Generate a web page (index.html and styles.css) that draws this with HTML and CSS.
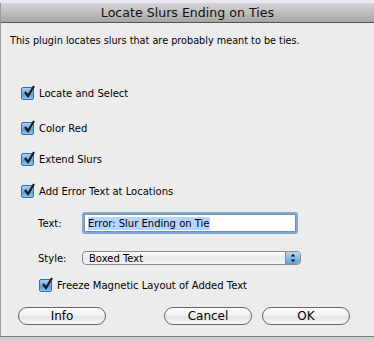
FILE: index.html
```html
<!DOCTYPE html>
<html>
    <head>
        <title>Locate Slurs Ending on Ties</title>
        <meta name="viewport" content="width=device-width, initial-scale=1.0">
        <link rel="stylesheet" href="styles.css">
    </head>
    <body>
        <div class="dialog">
            <div class="titlebar">Locate Slurs Ending on Ties</div>
            <div class="content">
                <p class="intro">This plugin locates slurs that are probably meant to be ties.</p>

                <label class="option opt-first"><span class="box"><svg viewBox="0 0 14 14"><path d="M3 7 L6 11 L12 1" /></svg></span>Locate and Select</label>
                <label class="option opt-color"><span class="box"><svg viewBox="0 0 14 14"><path d="M3 7 L6 11 L12 1" /></svg></span>Color Red</label>
                <label class="option opt-extend"><span class="box"><svg viewBox="0 0 14 14"><path d="M3 7 L6 11 L12 1" /></svg></span>Extend Slurs</label>
                <label class="option opt-error"><span class="box"><svg viewBox="0 0 14 14"><path d="M3 7 L6 11 L12 1" /></svg></span>Add Error Text at Locations</label>

                <div class="field-row text-row">
                    <span class="field-label">Text:</span>
                    <div class="text-input"><span class="selected">Error: Slur Ending on Tie</span></div>
                </div>
                <div class="field-row style-row">
                    <span class="field-label">Style:</span>
                    <div class="popup">
                        <span>Boxed Text</span>
                        <span class="arrows"><svg viewBox="0 0 14 13"><path d="M4.5 5 L7 2 L9.5 5 Z M4.5 8 L7 11 L9.5 8 Z" /></svg></span>
                    </div>
                </div>
                <label class="option opt-freeze"><span class="box"><svg viewBox="0 0 14 14"><path d="M3 7 L6 11 L12 1" /></svg></span>Freeze Magnetic Layout of Added Text</label>

                <div class="buttons">
                    <button class="pill">Info</button>
                    <div class="right-buttons">
                        <button class="pill">Cancel</button>
                        <button class="pill">OK</button>
                    </div>
                </div>
            </div>
        </div>
        <div class="behind"></div>
    </body>
</html>
```

FILE: styles.css
```css
body {
    margin: 0;
    background: #e6e9f2;
    font-family: "DejaVu Sans", "Liberation Sans", sans-serif;
    font-size: 10px;
    color: #000;
    width: 374px;
    height: 341px;
    overflow: hidden;
}
.dialog {
    margin-top: 3px;
    height: 333px;
    background: #ececec;
    border-left: 1px solid #9a9a9a;
    box-sizing: border-box;
}
.titlebar {
    height: 19px;
    background: linear-gradient(#d6d6d6, #a6a6a6);
    border-bottom: 1px solid #555;
    text-align: center;
    font-size: 12.6px;
    line-height: 20px;
    color: #111;
}
.content {
    padding: 0 0 0 9px;
}
.intro {
    margin: 0;
    padding-top: 11px;
    font-size: 9.7px;
    line-height: 13px;
}
.option {
    display: flex;
    align-items: center;
    font-size: 10px;
    height: 15px;
}
.opt-first { margin: 39px 0 0 11px; }
.opt-color { margin: 20px 0 0 11px; }
.opt-extend { margin: 16px 0 0 11px; }
.opt-error { margin: 17px 0 0 11px; }
.opt-freeze { margin: 13px 0 0 29px; }
.box {
    width: 13px;
    height: 13px;
    box-sizing: border-box;
    border: 1px solid #3b6ea8;
    border-radius: 2px;
    background: linear-gradient(#a9d1f5, #5d9fe0 60%, #8cc3f2);
    margin-right: 5px;
    position: relative;
}
.box svg {
    position: absolute;
    left: 0px;
    top: -3px;
    width: 14px;
    height: 14px;
    fill: none;
    stroke: #1a1a1a;
    stroke-width: 2.2;
}
.field-row {
    display: flex;
    align-items: center;
    margin-left: 28px;
}
.field-label {
    width: 46px;
    font-size: 10px;
}
.text-row { margin-top: 15px; }
.text-input {
    width: 207px;
    height: 16px;
    background: #fff;
    border: 1px solid #8a8a8a;
    box-shadow: 0 0 0 2px #7fa9d9;
    border-radius: 1px;
    display: flex;
    align-items: center;
    padding-left: 3px;
}
.selected {
    background: #b5d5ff;
    font-size: 10px;
    line-height: 13px;
}
.style-row { margin-top: 19px; }
.style-row .field-label { width: 44px; }
.popup {
    width: 219px;
    height: 14px;
    box-sizing: border-box;
    border: 1px solid #8a8a8a;
    border-radius: 4px;
    background: linear-gradient(#fff, #e9e9e9 50%, #f5f5f5);
    display: flex;
    align-items: center;
    justify-content: space-between;
    padding-left: 6px;
    font-size: 10px;
    overflow: hidden;
}
.arrows {
    width: 14px;
    height: 12px;
    background: linear-gradient(#b7d6f5, #5f9ee0);
    border-left: 1px solid #6d8fb8;
    border-radius: 0 3px 3px 0;
    display: flex;
}
.arrows svg {
    width: 14px;
    height: 12px;
    fill: #111;
}
.buttons {
    display: flex;
    justify-content: space-between;
    margin: 14px 24px 0 8px;
}
.right-buttons {
    display: flex;
    gap: 10px;
}
.pill {
    width: 88px;
    height: 18px;
    border: 1px solid #666;
    border-radius: 9px;
    background: linear-gradient(#fdfdfd, #f0f0f0 50%, #e2e2e2 55%, #fbfbfb);
    font-family: "DejaVu Sans", "Liberation Sans", sans-serif;
    font-size: 12px;
    padding: 0;
    color: #000;
}
.behind {
    height: 5px;
    border-top: 1px solid #7a7a7a;
    background: #cfcfcf;
}
```
